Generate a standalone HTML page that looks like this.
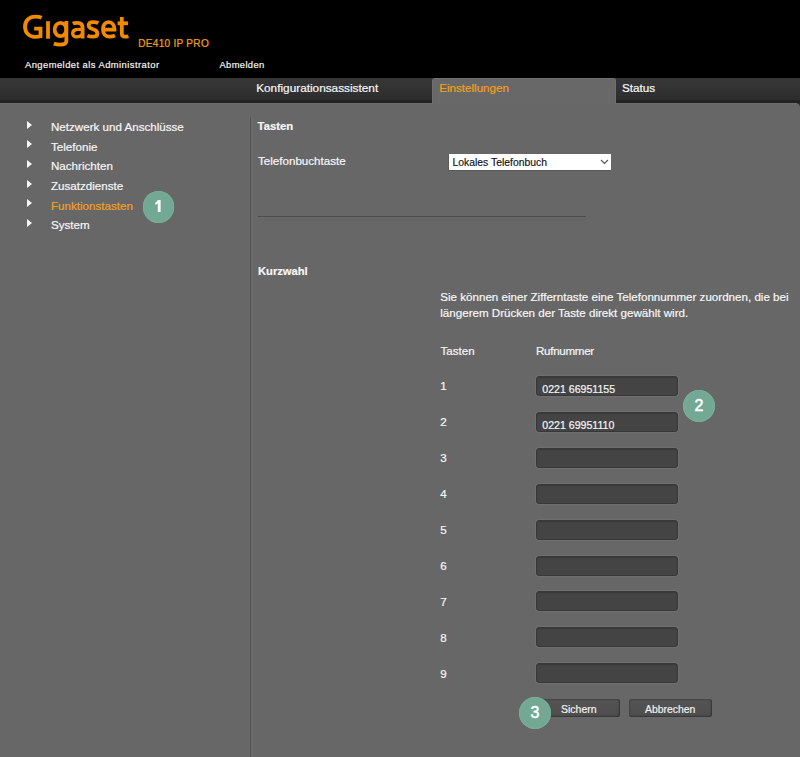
<!DOCTYPE html>
<html><head><meta charset="utf-8">
<style>
html,body{margin:0;padding:0;}
body{width:800px;height:757px;overflow:hidden;background:#676767;font-family:"Liberation Sans",sans-serif;color:#f6f6f6;position:relative;-webkit-text-stroke:0.2px currentColor;}
.a{position:absolute;white-space:nowrap;}
.org{color:#f0a020;}
.arrow{width:0;height:0;border-top:4.7px solid transparent;border-bottom:4.7px solid transparent;border-left:5px solid #f6f6f6;}
.inp{box-sizing:border-box;width:142px;height:20px;background:#444;border:1px solid #383838;border-radius:3px;box-shadow:0 0 0 1px #6f6f6f, inset 0 1px 1px #3a3a3a;}
.btn{box-sizing:border-box;height:18px;border-radius:3px;background:linear-gradient(#545454,#4e4e4e);box-shadow:inset 0 0 1.5px 0.5px #3a3a3a, inset -1px -1px 1px #3a3a3a;}
.badge{box-sizing:border-box;width:32px;height:32px;border-radius:50%;background:#72a894;box-shadow:inset 0 0 0 1px #78ae9b;color:#fff;font-size:16px;text-align:center;line-height:32.6px;-webkit-text-stroke:0.5px #fff;}
</style></head><body>
<div class="a" style="left:0;top:0;width:800px;height:78px;background:#000;"></div>
<svg class="a" style="left:0;top:0;" width="140" height="50" viewBox="0 0 140 50"><g fill="none" stroke="#f28a00" stroke-width="3.8" stroke-linecap="butt" stroke-linejoin="miter">
<path d="M41.6,17.8 C40,17 37.6,16.6 35.2,16.6 C29.2,16.6 25,20.8 25,26.7 C25,32.6 29,36.8 35,36.8 C37,36.8 39,36.6 40.5,36.2 L40.5,28.6 L34.2,28.6"/>
<path d="M48,21.2 L48,38.7"/>
<ellipse cx="60.5" cy="29.5" rx="5.85" ry="6.6"/>
<path d="M66.35,21 L66.35,41 C66.35,44 64,44.6 60,44.6 C57.5,44.6 55.5,44.2 53.8,43.6"/>
<path d="M72.8,23.6 C74.2,22.8 76,22.9 77.6,22.9 C81,22.9 82.6,24.5 82.6,28 L82.6,38.6"/>
<path d="M82.6,29.3 C80,29.3 78,29.2 76.5,29.5 C74,29.9 72.7,31.3 72.7,33.4 C72.7,35.5 74.4,36.8 76.5,36.8 C79.5,36.8 81.5,35.4 82.6,33.9" stroke-width="3.3"/>
<path d="M98.3,23.2 C97,22.4 95,22.2 93,22.2 C90.3,22.2 88.7,23.6 88.7,25.5 C88.7,27.8 90.8,28.6 93,29.3 C95.6,30.1 97.4,31 97.4,33.4 C97.4,35.5 95.6,36.7 92.6,36.7 C90.6,36.7 88.8,36.3 87.4,35.6"/>
<path d="M103,29.6 L114.5,29.6 C114.5,24.9 112,22.2 108.7,22.2 C105,22.2 103,25.2 103,29.5 C103,34 105.5,36.7 109.5,36.7 C111.6,36.7 113.4,36.3 115,35.6"/>
<path d="M121.8,17 L121.8,33.5 C121.8,35.9 123,36.7 125,36.7 C126.2,36.7 127.4,36.5 128.4,36.2"/>
<path d="M117.6,23.3 L128.1,23.3"/>
</g></svg>
<div class="a org" style="left:138.3px;top:37.4px;font-size:10.1px;line-height:13px;color:#f0a020;letter-spacing:0.25px;">DE410 IP PRO</div>
<div class="a " style="left:25px;top:59.04px;font-size:9.4px;line-height:12px;color:#f4f4f4;letter-spacing:0.45px;">Angemeldet als Administrator</div>
<div class="a " style="left:219.5px;top:59.04px;font-size:9.4px;line-height:12px;color:#f4f4f4;letter-spacing:0.35px;">Abmelden</div>
<div class="a" style="left:0;top:78px;width:800px;height:25px;background:linear-gradient(#373737,#2d2d2d 88%,#232323 88%,#232323);"></div>
<div class="a" style="left:0;top:103px;width:800px;height:1px;background:#6d6d6d;"></div>
<div class="a" style="left:797px;top:103px;width:3px;height:3px;background:radial-gradient(circle at 0 100%, rgba(0,0,0,0) 2px, #2a2a2a 3px);"></div>
<div class="a" style="left:432px;top:78px;width:182px;height:25px;background:#686868;border:1px solid #6f6f6f;border-bottom:0;border-radius:3px 3px 0 0;"></div>
<div class="a " style="left:256.2px;top:81.31px;font-size:11.8px;line-height:14px;">Konfigurationsassistent</div>
<div class="a org" style="left:439.3px;top:81.38px;font-size:11.6px;line-height:14px;">Einstellungen</div>
<div class="a " style="left:622px;top:81.35px;font-size:11.7px;line-height:14px;">Status</div>
<div class="a arrow" style="left:27px;top:120.9px;"></div>
<div class="a " style="left:51px;top:120.38px;font-size:11.6px;line-height:14px;">Netzwerk und Anschlüsse</div>
<div class="a arrow" style="left:27px;top:140.45px;"></div>
<div class="a " style="left:51px;top:139.93px;font-size:11.6px;line-height:14px;">Telefonie</div>
<div class="a arrow" style="left:27px;top:160.0px;"></div>
<div class="a " style="left:51px;top:159.48px;font-size:11.6px;line-height:14px;">Nachrichten</div>
<div class="a arrow" style="left:27px;top:179.55px;"></div>
<div class="a " style="left:51px;top:179.03px;font-size:11.6px;line-height:14px;">Zusatzdienste</div>
<div class="a arrow" style="left:27px;top:199.1px;"></div>
<div class="a org" style="left:51px;top:198.58px;font-size:11.6px;line-height:14px;">Funktionstasten</div>
<div class="a arrow" style="left:27px;top:218.65px;"></div>
<div class="a " style="left:51px;top:218.13px;font-size:11.6px;line-height:14px;">System</div>
<div class="a" style="left:249px;top:117px;width:1px;height:640px;background:#6c6c6c;border-right:1px solid #4e4e4e;box-shadow:2px 0 0 #6c6c6c;"></div>
<div class="a " style="left:257.6px;top:118.68px;font-size:11.3px;line-height:14px;font-weight:bold;">Tasten</div>
<div class="a " style="left:258px;top:154.23px;font-size:11.6px;line-height:14px;">Telefonbuchtaste</div>
<div class="a" style="left:449px;top:154px;width:162px;height:16px;background:#fff;box-shadow:-1px 1px 0 #5a5a5a;"></div>
<div class="a " style="left:452.5px;top:155.9px;font-size:10.4px;line-height:13px;color:#111;-webkit-text-stroke:0.15px #111;">Lokales Telefonbuch</div>
<svg class="a" style="left:600px;top:159px;" width="9" height="6" viewBox="0 0 9 6"><polyline points="1,1 4.5,4.5 8,1" fill="none" stroke="#555" stroke-width="1.1"/></svg>
<div class="a" style="left:258px;top:216px;width:328px;height:1px;background:#4d4d4d;"></div>
<div class="a " style="left:258px;top:263.62px;font-size:11.2px;line-height:14px;font-weight:bold;">Kurzwahl</div>
<div class="a " style="left:440.3px;top:290.18px;font-size:11.6px;line-height:14px;">Sie können einer Zifferntaste eine Telefonnummer zuordnen, die bei</div>
<div class="a " style="left:440.3px;top:306.18px;font-size:11.6px;line-height:14px;">längerem Drücken der Taste direkt gewählt wird.</div>
<div class="a " style="left:440.5px;top:343.78px;font-size:11.6px;line-height:14px;">Tasten</div>
<div class="a " style="left:536px;top:343.78px;font-size:11.6px;line-height:14px;letter-spacing:-0.3px;">Rufnummer</div>
<div class="a " style="left:440.3px;top:379.38px;font-size:11.6px;line-height:14px;">1</div>
<div class="a inp" style="left:536px;top:376.0px;"></div>
<div class="a " style="left:542.3px;top:382.83px;font-size:10.6px;line-height:13px;color:#f4f4f4;">0221 66951155</div>
<div class="a " style="left:440.3px;top:415.28px;font-size:11.6px;line-height:14px;">2</div>
<div class="a inp" style="left:536px;top:411.9px;"></div>
<div class="a " style="left:542.3px;top:418.73px;font-size:10.6px;line-height:13px;color:#f4f4f4;">0221 69951110</div>
<div class="a " style="left:440.3px;top:451.18px;font-size:11.6px;line-height:14px;">3</div>
<div class="a inp" style="left:536px;top:447.8px;"></div>
<div class="a " style="left:440.3px;top:487.08px;font-size:11.6px;line-height:14px;">4</div>
<div class="a inp" style="left:536px;top:483.7px;"></div>
<div class="a " style="left:440.3px;top:522.98px;font-size:11.6px;line-height:14px;">5</div>
<div class="a inp" style="left:536px;top:519.6px;"></div>
<div class="a " style="left:440.3px;top:558.88px;font-size:11.6px;line-height:14px;">6</div>
<div class="a inp" style="left:536px;top:555.5px;"></div>
<div class="a " style="left:440.3px;top:594.78px;font-size:11.6px;line-height:14px;">7</div>
<div class="a inp" style="left:536px;top:591.4px;"></div>
<div class="a " style="left:440.3px;top:630.68px;font-size:11.6px;line-height:14px;">8</div>
<div class="a inp" style="left:536px;top:627.3px;"></div>
<div class="a " style="left:440.3px;top:666.58px;font-size:11.6px;line-height:14px;">9</div>
<div class="a inp" style="left:536px;top:663.2px;"></div>
<div class="a btn" style="left:538px;top:699px;width:82px;"></div>
<div class="a " style="left:561px;top:703.06px;font-size:10.5px;line-height:13px;color:#f0f0f0;">Sichern</div>
<div class="a btn" style="left:629px;top:699px;width:83px;"></div>
<div class="a " style="left:645px;top:703.1px;font-size:10.4px;line-height:13px;color:#f0f0f0;">Abbrechen</div>
<div class="a badge" style="left:142.6px;top:191.3px;width:31.4px;height:31.4px;"></div>
<svg class="a" style="left:142px;top:191px;" width="32" height="32" viewBox="0 0 32 32"><path d="M15.8,9 L18.6,9 L18.6,21 L15.8,21 L15.8,12.5 C15,13.1 14.1,13.5 13.2,13.7 L13.2,11.8 C14.2,11.4 15.2,10.3 15.8,9 Z" fill="#fff"/></svg>
<div class="a badge" style="left:683px;top:390px;">2</div>
<div class="a badge" style="left:519px;top:697px;">3</div>
</body></html>
